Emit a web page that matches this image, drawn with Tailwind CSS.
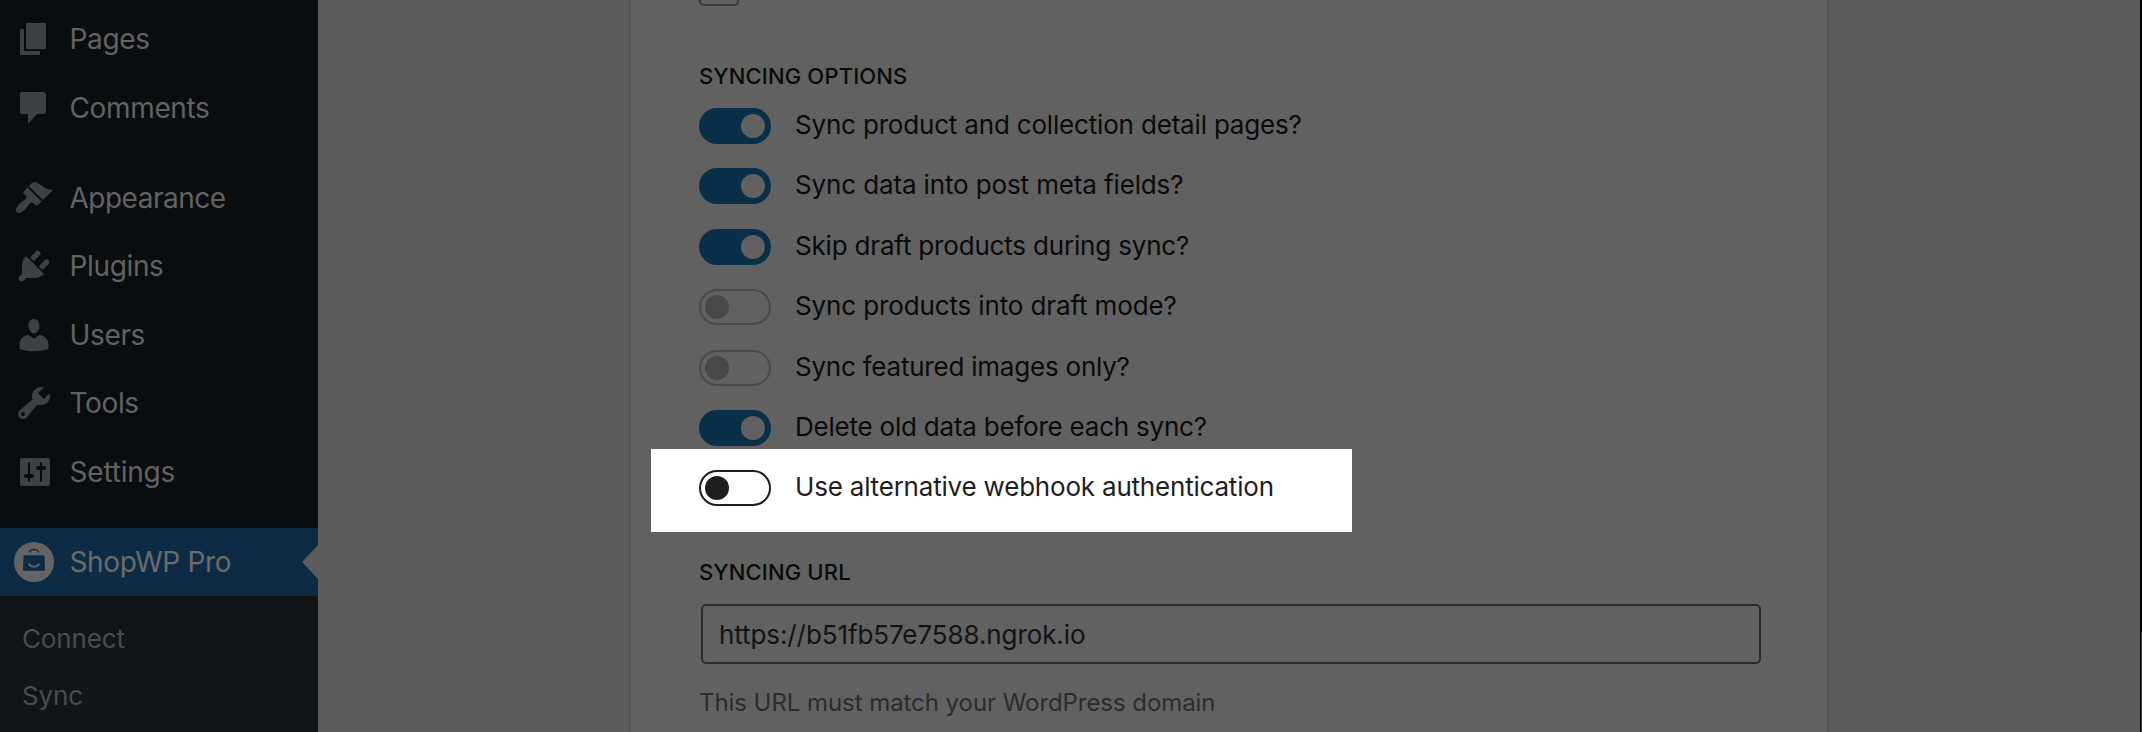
<!DOCTYPE html>
<html lang="en">
<head>
<meta charset="utf-8">
<title>ShopWP Pro – Sync settings</title>
<script src="https://cdn.jsdelivr.net/npm/@tailwindcss/browser@4"></script>
</head>
<body class="flex h-[732px] w-[2142px] overflow-hidden bg-[#5b5b5b] font-['Inter',sans-serif] text-[#0a0a0a]">

  <!-- Admin menu -->
  <aside class="h-full w-[318px] shrink-0 bg-[#0a0d10] pt-[5px] text-[28px] leading-[34px] tracking-[-0.35px] text-[#626263]">
    <nav>
      <a class="flex h-[68.4px] items-center gap-[15.5px] pl-[14px]">
        <svg class="size-10 shrink-0 fill-[#3e4043]" viewBox="0 0 20 20"><path d="M6 15V2h10v13H6zm-1 1h8v2H3V5h2v11z"/></svg>Pages</a>
      <a class="mb-[22px] flex h-[68.4px] items-center gap-[15.5px] pl-[14px]">
        <svg class="size-10 shrink-0 fill-[#3e4043]" viewBox="0 0 20 20"><path d="M4.2 2h10.6c.7 0 1.2.5 1.2 1.2v8.6c0 .7-.5 1.2-1.2 1.2H11.500l-4.500 5v-5H4.200c-.7 0-1.200-.5-1.200-1.200V3.200C3 2.500 3.500 2 4.200 2z"/></svg>Comments</a>
      <a class="flex h-[68.4px] items-center gap-[15.5px] pl-[14px] tracking-[-0.5px]">
        <svg class="size-10 shrink-0 fill-[#3e4043]" viewBox="0 0 20 20"><path d="M14.48 11.06L7.41 3.99l1.5-1.5c.5-.56 2.3-.47 3.51.32 1.21.8 1.43 1.28 2.91 2.1 1.18.64 2.45 1.26 4.45.85zm-.71.71L6.7 4.7 4.93 6.47c-.39.39-.39 1.02 0 1.41l1.06 1.06c.39.39.39 1.03 0 1.42-.6.6-1.43 1.11-2.21 1.69-.35.26-.7.53-1.01.84C1.43 14.23.4 16.08 1.4 17.07c.99 1 2.84-.03 4.18-1.36.31-.31.58-.66.85-1.02.57-.78 1.08-1.61 1.69-2.21.39-.39 1.02-.39 1.41 0l1.06 1.06c.39.39 1.02.39 1.41 0z"/></svg>Appearance</a>
      <a class="flex h-[68.4px] items-center gap-[15.5px] pl-[14px]">
        <svg class="size-10 shrink-0 fill-[#3e4043]" viewBox="0 0 20 20"><path d="M13.11 4.36L9.87 7.6 8 5.73l3.24-3.24c.35-.34 1.05-.2 1.56.32.52.51.66 1.21.31 1.55zm-8 1.77l.91-1.12 9.01 9.01-1.19.84c-.71.71-2.63 1.16-3.82 1.16H6.14L4.9 17.26c-.59.59-1.54.59-2.12 0-.59-.58-.59-1.53 0-2.12l1.24-1.24v-3.88c0-1.13.4-3.19 1.09-3.89zm7.26 3.97l3.24-3.24c.34-.35 1.04-.21 1.55.31.52.51.66 1.21.31 1.55l-3.24 3.25z"/></svg>Plugins</a>
      <a class="flex h-[68.4px] items-center gap-[15.5px] pl-[14px]">
        <svg class="size-10 shrink-0 fill-[#3e4043]" viewBox="0 0 20 20"><path d="M10 9.25c-2.27 0-2.73-3.44-2.73-3.44C7 4.02 7.82 2 9.97 2c2.16 0 2.98 2.02 2.71 3.81 0 0-.41 3.44-2.68 3.44zm0 2.57L12.72 10c2.39 0 4.52 2.33 4.52 4.53v2.49s-3.65 1.13-7.24 1.13c-3.65 0-7.24-1.13-7.24-1.13v-2.49c0-2.25 1.94-4.48 4.47-4.48z"/></svg>Users</a>
      <a class="flex h-[68.4px] items-center gap-[15.5px] pl-[14px]">
        <svg class="size-10 shrink-0 fill-[#3e4043]" viewBox="0 0 20 20"><path d="M16.68 9.77c-1.34 1.34-3.3 1.67-4.95.99l-5.41 6.52c-.99.99-2.59.99-3.58 0s-.99-2.59 0-3.57l6.52-5.42c-.68-1.65-.35-3.61.99-4.95 1.28-1.28 3.12-1.62 4.72-1.06l-2.89 2.89 2.82 2.82 2.86-2.87c.53 1.58.18 3.39-1.08 4.65zM3.81 16.21c.4.39 1.04.39 1.43 0 .4-.4.4-1.04 0-1.43-.39-.4-1.03-.4-1.43 0-.39.39-.39 1.03 0 1.43z"/></svg>Tools</a>
      <a class="mb-[22px] flex h-[68.4px] items-center gap-[15.5px] pl-[14px] tracking-[-0.2px]">
        <svg class="size-10 shrink-0 fill-[#3e4043]" viewBox="0 0 20 20"><path d="M18 16V4c0-.55-.45-1-1-1H4c-.55 0-1 .45-1 1v12c0 .55.45 1 1 1h13c.55 0 1-.45 1-1zM8 11h1c.55 0 1 .45 1 1s-.45 1-1 1H8v1.5c0 .28-.22.5-.5.5s-.5-.22-.5-.5V13H6c-.55 0-1-.45-1-1s.45-1 1-1h1V5.5c0-.28.22-.5.5-.5s.5.22.5.5V11zm5-2h-1c-.55 0-1-.45-1-1s.45-1 1-1h1V5.5c0-.28.22-.5.5-.5s.5.22.5.5V7h1c.55 0 1 .45 1 1s-.45 1-1 1h-1v5.5c0 .28-.22.5-.5.5s-.5-.22-.5-.5V9z"/></svg>Settings</a>
      <a class="flex h-[68.2px] items-center gap-[15.5px] bg-[#0e2b46] pl-[14px] text-[#6b6b6b]">
        <svg class="size-10 shrink-0" viewBox="0 0 40 40" fill="none">
          <circle cx="20" cy="20" r="20" fill="#646464"/>
          <path d="M9.500 13.200h21l.5 15.600H9z" fill="#0e2b46"/>
          <path d="M15.500 10.500c.8-4 8.200-4 9 0" stroke="#0e2b46" stroke-width="1.500"/>
          <path d="M14.800 21.500c1.700 4.300 8.700 4.300 10.400 0" stroke="#646464" stroke-width="2"/>
        </svg>
        <span class="grow">ShopWP Pro</span>
        <svg class="h-[34px] w-4" viewBox="0 0 16 34"><path d="M16 0v34L0 17z" fill="#5b5b5b"/></svg>
      </a>
    </nav>
    <div class="h-[140px] bg-[#111518] pt-[15px] pl-[22px] text-[26px] tracking-[-0.15px] text-[#4a4c4d]">
      <div class="flex h-[57px] items-center">Connect</div>
      <div class="flex h-[57px] items-center">Sync</div>
    </div>
  </aside>

  <!-- Settings card -->
  <main class="ml-[311px] h-full w-[1200px] shrink-0 border-x-2 border-[#545454] bg-[#616161] px-[68px]">
    <div class="h-1.5 w-10 rounded-b-[5px] border-2 border-t-0 border-[#3b3b3b]"></div>
    <h2 class="mt-[56px] h-7 text-[22px] leading-7 font-medium tracking-[0.14px]">SYNCING OPTIONS</h2>

    <div class="mt-[5.800px] text-[26px] leading-8 tracking-[-0.18px]">
      <label class="flex h-[60.4px] items-center gap-6">
        <span class="flex h-9 w-[72px] items-center justify-end rounded-full bg-[#0a3049] pr-1.5"><span class="size-6 rounded-full bg-[#616161]"></span></span>
        <span class="pb-px">Sync product and collection detail pages?</span></label>
      <label class="flex h-[60.4px] items-center gap-6">
        <span class="flex h-9 w-[72px] items-center justify-end rounded-full bg-[#0a3049] pr-1.5"><span class="size-6 rounded-full bg-[#616161]"></span></span>
        <span class="pb-0.5 tracking-[-0.13px]">Sync data into post meta fields?</span></label>
      <label class="flex h-[60.4px] items-center gap-6">
        <span class="flex h-9 w-[72px] items-center justify-end rounded-full bg-[#0a3049] pr-1.5"><span class="size-6 rounded-full bg-[#616161]"></span></span>
        <span class="pb-px">Skip draft products during sync?</span></label>
      <label class="flex h-[60.4px] items-center gap-6">
        <span class="flex h-9 w-[72px] items-center rounded-full border-2 border-[#4a4a4a] pl-1"><span class="size-6 rounded-full bg-[#484848]"></span></span>
        <span class="pb-0.5 tracking-[-0.13px]">Sync products into draft mode?</span></label>
      <label class="flex h-[60.4px] items-center gap-6">
        <span class="flex h-9 w-[72px] items-center rounded-full border-2 border-[#4a4a4a] pl-1"><span class="size-6 rounded-full bg-[#484848]"></span></span>
        <span class="pb-px tracking-[-0.22px]">Sync featured images only?</span></label>
      <label class="flex h-[60.4px] items-center gap-6">
        <span class="flex h-9 w-[72px] items-center justify-end rounded-full bg-[#0a3049] pr-1.5"><span class="size-6 rounded-full bg-[#616161]"></span></span>
        <span class="pb-px tracking-[-0.22px]">Delete old data before each sync?</span></label>
      <label class="-mt-[9.200px] -ml-12 flex h-[83px] w-[701px] items-start gap-6 bg-white pt-[21px] pl-12 tracking-[-0.2px] text-[#1e1e1e]">
        <span class="flex h-9 w-[72px] items-center rounded-full border-2 border-[#1e1e1e] pl-1"><span class="size-6 rounded-full bg-[#1e1e1e]"></span></span>
        <span class="pt-px">Use alternative webhook authentication</span></label>
    </div>

    <h2 class="mt-[26px] h-7 text-[22px] leading-7 font-medium tracking-[0.14px]">SYNCING URL</h2>
    <div class="mt-[18px] ml-0.5 flex h-[60px] w-[1060px] items-center rounded-[5px] border-2 border-[#2b2b2b] pl-4 text-[26px] leading-8 tracking-[-0.09px] text-[#121314]"><span class="pt-0.5">https://b51fb57e7588.ngrok.io</span></div>
    <p class="mt-[23px] text-[24px] leading-8 tracking-[-0.06px] text-[#2c2c2c]">This URL must match your WordPress domain</p>
  </main>

  <!-- Window edge -->
  <div class="ml-auto flex w-0.5 flex-col">
    <div class="h-[632px] bg-black"></div>
    <div class="grow border-l border-black bg-[#3a3a3a]"></div>
  </div>
</body>
</html>
